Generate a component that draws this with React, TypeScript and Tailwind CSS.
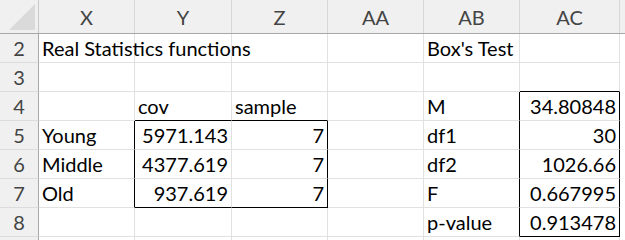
import React from "react";

type Cell = { t?: string; r?: boolean };

const cols = ["X", "Y", "Z", "AA", "AB", "AC"];
const widths = ["w-[96px]", "w-[97px]", "w-[96px]", "w-[96px]", "w-[96px]", "w-[100px]"];

const rows: { n: number; cells: Cell[] }[] = [
  { n: 2, cells: [{ t: "Real Statistics functions" }, {}, {}, {}, { t: "Box's Test" }, {}] },
  { n: 3, cells: [{}, {}, {}, {}, {}, {}] },
  { n: 4, cells: [{}, { t: "cov" }, { t: "sample" }, {}, { t: "M" }, { t: "34.80848", r: true }] },
  { n: 5, cells: [{ t: "Young" }, { t: "5971.143", r: true }, { t: "7", r: true }, {}, { t: "df1" }, { t: "30", r: true }] },
  { n: 6, cells: [{ t: "Middle" }, { t: "4377.619", r: true }, { t: "7", r: true }, {}, { t: "df2" }, { t: "1026.66", r: true }] },
  { n: 7, cells: [{ t: "Old" }, { t: "937.619", r: true }, { t: "7", r: true }, {}, { t: "F" }, { t: "0.667995", r: true }] },
  { n: 8, cells: [{}, {}, {}, {}, { t: "p-value" }, { t: "0.913478", r: true }] },
];

function rightBlack(n: number, c: number) {
  if (c === 0 && n >= 5 && n <= 7) return true;
  if (c === 2 && n >= 5 && n <= 7) return true;
  if (c === 4 && n >= 4 && n <= 8) return true;
  if (c === 5 && n >= 4 && n <= 8) return true;
  return false;
}

function bottomBlack(n: number, c: number) {
  if ((c === 1 || c === 2) && (n === 4 || n === 7)) return true;
  if (c === 5 && (n === 3 || n === 8)) return true;
  return false;
}

export default function App() {
  return (
    <div
      className="w-[625px] h-[240px] overflow-hidden bg-white text-[20px] text-black"
      style={{ fontFamily: "Lato, 'Open Sans', sans-serif" }}
    >
      <div className="flex h-[34px] bg-[#f0f0f0] border-b border-b-[#a8a8a8]">
        <div className="relative w-[39px] shrink-0 border-r border-r-[#c8c8c8]">
          <div className="absolute right-[3px] bottom-[3px] w-0 h-0 border-l-[26px] border-l-transparent border-b-[26px] border-b-[#dadada]" />
        </div>
        {cols.map((c, i) => (
          <div
            key={c}
            className={`${widths[i]} shrink-0 flex items-center justify-center text-[#444] border-r border-r-[#d8d8d8]`}
          >
            {c}
          </div>
        ))}
      </div>
      {rows.map((row) => (
        <div key={row.n} className="flex h-[29px]">
          <div className="w-[39px] shrink-0 bg-[#f0f0f0] border-r border-r-[#a8a8a8] border-b border-b-[#dcdcdc] flex items-end justify-center pb-[1px] text-[#444]">
            <span className="leading-[26px]">{row.n}</span>
          </div>
          {row.cells.map((cell, c) => (
            <div
              key={c}
              className={`${widths[c]} shrink-0 border-r border-b flex items-end pb-[1px] whitespace-nowrap overflow-visible ${
                rightBlack(row.n, c) ? "border-r-black" : "border-r-[#e1e1e1]"
              } ${bottomBlack(row.n, c) ? "border-b-black" : "border-b-[#e1e1e1]"} ${
                cell.r ? "justify-end pr-[3px]" : "justify-start pl-[3px]"
              }`}
            >
              {cell.t ? <span className="leading-[26px]">{cell.t}</span> : null}
            </div>
          ))}
        </div>
      ))}
      <div className="flex h-[29px]">
        <div className="w-[39px] shrink-0 bg-[#f0f0f0] border-r border-r-[#a8a8a8]" />
        {widths.map((w, c) => (
          <div key={c} className={`${w} shrink-0 border-r border-r-[#e1e1e1]`} />
        ))}
      </div>
    </div>
  );
}
